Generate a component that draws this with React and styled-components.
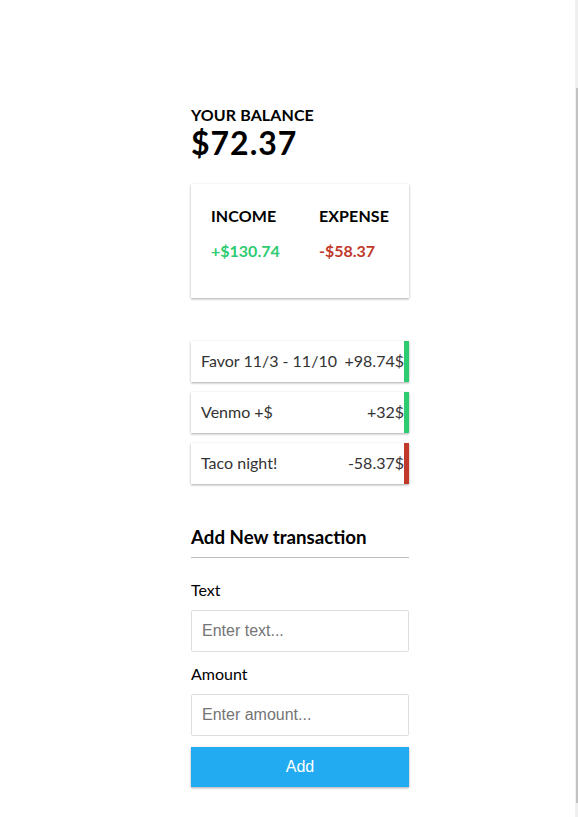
import React from "react";
import styled, { createGlobalStyle } from "styled-components";

const GlobalStyle = createGlobalStyle`
  * { box-sizing: border-box; }
  html, body { margin: 0; padding: 0; background: #ffffff; }
  body { font-family: Lato, "Noto Sans", sans-serif; color: #000; }
`;

const shadow = "0 1px 3px rgba(0,0,0,0.12), 0 1px 2px rgba(0,0,0,0.24)";

const Page = styled.div`
  padding: 104px 0 30px 191px;
`;

const Container = styled.div`
  width: 218px;
`;

const SmallHeading = styled.h4`
  margin: 0;
  font-size: 16px;
  line-height: ${(p) => p.$lh || "22px"};
  font-weight: 700;
  letter-spacing: 0.1px;
  text-transform: uppercase;
`;

const Balance = styled.h1`
  margin: 0;
  font-size: 32px;
  line-height: 34px;
  font-weight: 700;
  letter-spacing: 1px;
`;

const IncExp = styled.div`
  background: #fff;
  box-shadow: ${shadow};
  padding: 22px 20px 20px;
  margin: 24px 0 0;
  display: flex;
  justify-content: space-between;
`;

const Money = styled.p`
  margin: 15px 0 17px;
  font-size: 16px;
  line-height: 20px;
  font-weight: 700;
  color: ${(p) => (p.$type === "plus" ? "#2ecc71" : "#c0392b")};
`;

const List = styled.ul`
  list-style: none;
  padding: 0;
  margin: 43px 0 0;
  display: flex;
  flex-direction: column;
  gap: 10px;
`;

const Item = styled.li`
  background: #fff;
  box-shadow: ${shadow};
  color: #333;
  display: flex;
  justify-content: space-between;
  padding: 9px 0 11px 10px;
  font-size: 16px;
  line-height: 21px;
  border-right: 5px solid ${(p) => (p.$type === "plus" ? "#2ecc71" : "#c0392b")};
`;

const FormHeading = styled.h3`
  margin: 41px 0 10px;
  font-size: 18.72px;
  line-height: 24px;
  font-weight: 700;
  padding-bottom: 8px;
  border-bottom: 1px solid #bbb;
`;

const FormControl = styled.div`
  display: flex;
  flex-direction: column;
  align-items: flex-start;
`;

const Label = styled.label`
  margin: 11px 0 10px;
  font-size: 16px;
  line-height: 21px;
`;

const Input = styled.input`
  display: block;
  align-self: stretch;
  height: 42px;
  border: 1px solid #dedede;
  border-radius: 2px;
  padding: 10px;
  font-family: "Liberation Sans", Arial, sans-serif;
  font-size: 16px;
  color: #000;
  &::placeholder { color: #757575; }
`;

const Button = styled.button`
  display: block;
  width: 100%;
  height: 40px;
  margin: 11px 0 30px;
  border: 0;
  background: #22abf0;
  color: #fff;
  font-family: "Liberation Sans", Arial, sans-serif;
  font-size: 16px;
  box-shadow: ${shadow};
  cursor: pointer;
`;

const ScrollTrack = styled.div`
  position: fixed;
  top: 0;
  right: 0;
  width: 3px;
  height: 100vh;
  background: #efefef;
`;

const ScrollThumb = styled.div`
  position: absolute;
  top: 88px;
  right: 0;
  width: 2px;
  bottom: 14px;
  background: #c2c2c2;
`;

const transactions = [
  { text: "Favor 11/3 - 11/10", amount: "+98.74$", type: "plus" },
  { text: "Venmo +$", amount: "+32$", type: "plus" },
  { text: "Taco night!", amount: "-58.37$", type: "minus" },
];

export default function App() {
  return (
    <>
      <GlobalStyle />
      <Page>
        <Container>
          <SmallHeading>Your Balance</SmallHeading>
          <Balance>$72.37</Balance>
          <IncExp>
            <div>
              <SmallHeading $lh="20px">Income</SmallHeading>
              <Money $type="plus">+$130.74</Money>
            </div>
            <div>
              <SmallHeading $lh="20px">Expense</SmallHeading>
              <Money $type="minus">-$58.37</Money>
            </div>
          </IncExp>
          <List>
            {transactions.map((t) => (
              <Item key={t.text} $type={t.type}>
                <span>{t.text}</span>
                <span>{t.amount}</span>
              </Item>
            ))}
          </List>
          <FormHeading>Add New transaction</FormHeading>
          <form onSubmit={(e) => e.preventDefault()}>
            <FormControl>
              <Label htmlFor="text">Text</Label>
              <Input id="text" type="text" placeholder="Enter text..." />
            </FormControl>
            <FormControl>
              <Label htmlFor="amount">Amount</Label>
              <Input id="amount" type="number" placeholder="Enter amount..." />
            </FormControl>
            <Button type="submit">Add</Button>
          </form>
        </Container>
      </Page>
      <ScrollTrack>
        <ScrollThumb />
      </ScrollTrack>
    </>
  );
}
